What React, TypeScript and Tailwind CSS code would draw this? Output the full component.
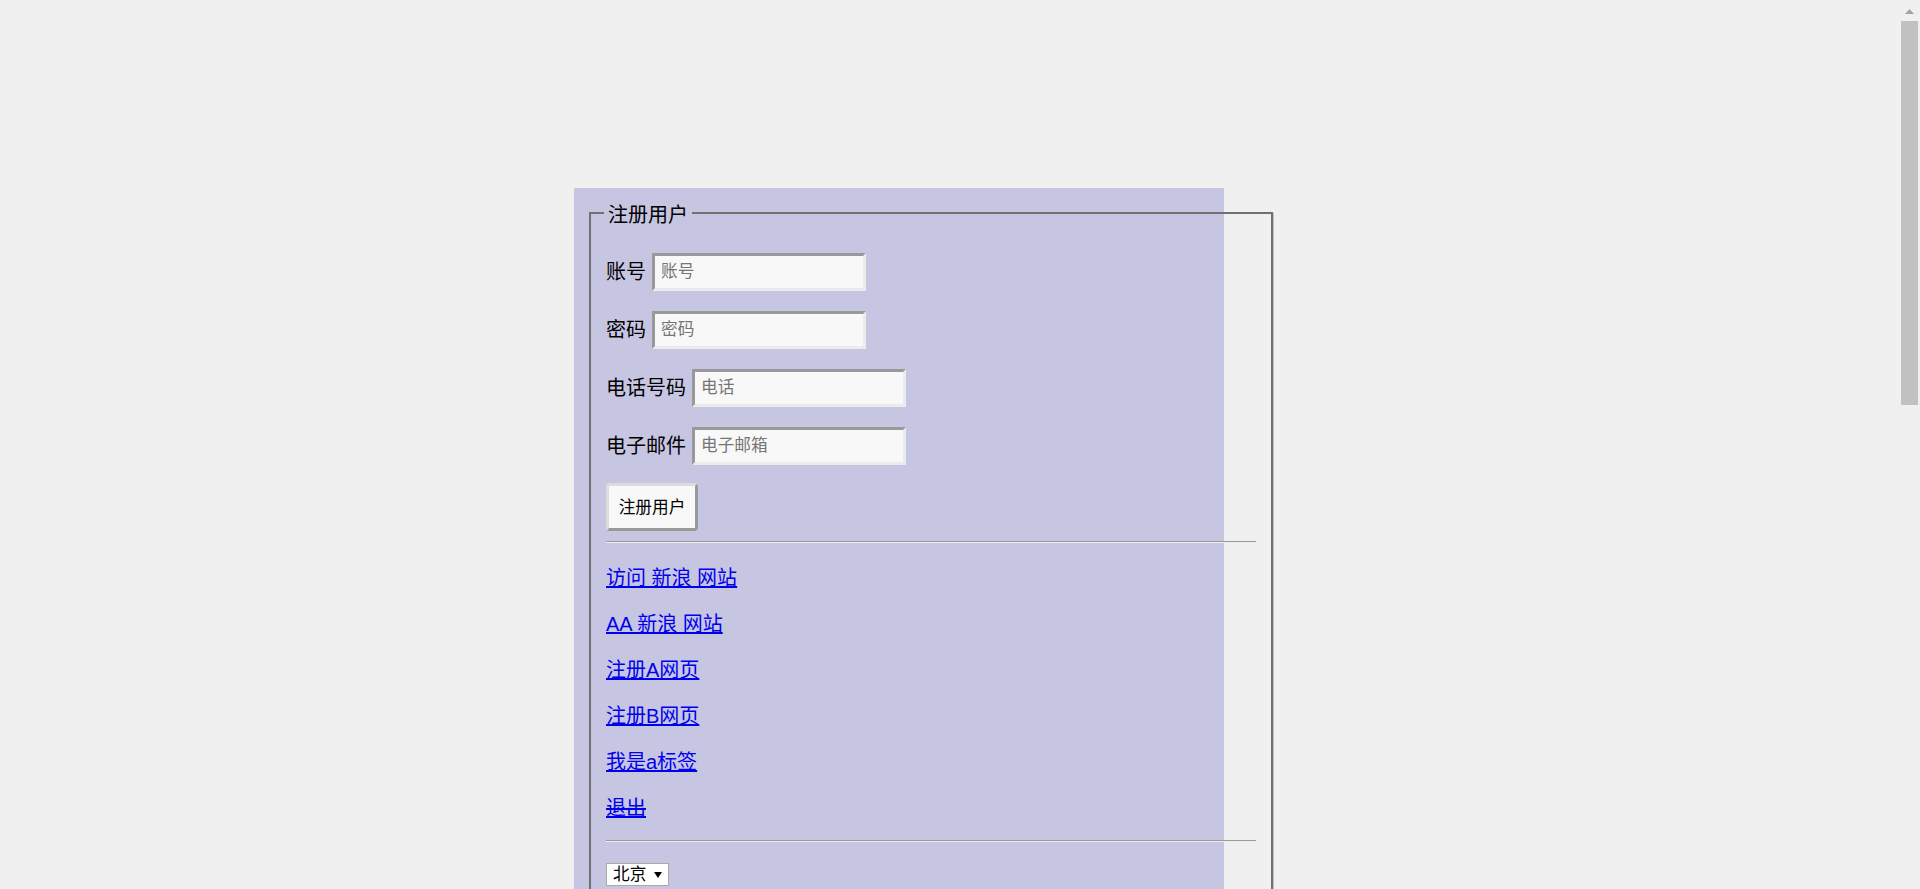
import React from "react";

const fields = [
  { label: "账号", placeholder: "账号", type: "text" },
  { label: "密码", placeholder: "密码", type: "password" },
  { label: "电话号码", placeholder: "电话", type: "tel" },
  { label: "电子邮件", placeholder: "电子邮箱", type: "email" },
];

const links = [
  { text: "访问 新浪 网站", strike: false },
  { text: "AA 新浪 网站", strike: false },
  { text: "注册A网页", strike: false },
  { text: "注册B网页", strike: false },
  { text: "我是a标签", strike: false },
  { text: "退出", strike: true },
];

const Rule = () => (
  <hr className="h-[2px] border-0 border-t border-b border-t-[#9a9a9a] border-b-[#eeeeee]" />
);

// stand-in for the browser's classic scrollbar seen in the screenshot
const Scrollbar = () => (
  <div aria-hidden className="fixed right-0 top-0 h-screen w-[19px] bg-[#f0f0f0]">
    <svg className="absolute left-[4px] top-[9px]" width="9" height="5" viewBox="0 0 9 5">
      <path d="M4.5 0L9 5H0z" fill="#a3a3a3" />
    </svg>
    <div className="absolute left-0 top-[21px] h-[384px] w-[17px] bg-[#c1c1c1]" />
  </div>
);

export default function App() {
  return (
    <div className="min-h-screen bg-[#f0f0f0] pt-[188px] pb-[40px] font-['Liberation_Sans','Noto_Sans_CJK_SC',sans-serif] text-[20px] text-black">
      <div className="ml-[574px] w-[650px] bg-[#c7c6e2] pt-[12px]">
        <fieldset className="ml-[15px] w-[684px] min-h-[1760px] border-2 border-[#717171] px-[15px] shadow-[1px_1px_0_#c4c4c4]">
          <legend className="-ml-[2px] px-[4px] leading-[26px]">
            <span className="relative top-[2px]">注册用户</span>
          </legend>

          <form className="pt-[27px]" onSubmit={(e) => e.preventDefault()}>
            {fields.map((f) => (
              <div key={f.label} className="mb-[20px] flex h-[38px] items-center gap-[6px]">
                <label className="leading-[26px]">{f.label}</label>
                <input
                  type={f.type}
                  placeholder={f.placeholder}
                  className="h-[38px] w-[214px] border-[3px] border-t-[#999999] border-l-[#999999] border-r-[#ebebeb] border-b-[#ebebeb] bg-[#f8f8f8] px-[6px] text-[16.67px] outline-none placeholder:text-[#757575]"
                />
              </div>
            ))}

            <button
              type="submit"
              className="-mt-[2px] flex h-[48px] w-[92px] items-center justify-center rounded-[4px] border-[3px] border-t-[#dcdcdc] border-l-[#dcdcdc] border-r-[#999999] border-b-[#999999] bg-[#f8f8f8] text-[16.67px]"
            >
              注册用户
            </button>
          </form>

          <div className="mt-[10px]">
            <Rule />
          </div>

          <div className="mt-[22px] flex flex-col gap-[20px]">
            {links.map((l) => (
              <p key={l.text} className="leading-[26px]">
                <a
                  href="#"
                  className={
                    l.strike
                      ? "text-[#0000ee] [text-decoration-line:underline_line-through]"
                      : "text-[#0000ee] underline"
                  }
                >
                  {l.text}
                </a>
              </p>
            ))}
          </div>

          <div className="mt-[19px]">
            <Rule />
          </div>

          <div className="relative mt-[21px] flex w-fit">
            <select className="h-[23px] w-[63px] appearance-none border border-[#a9a9a9] bg-white pl-[6px] text-[16.67px] leading-[21px] text-black outline-none">
              <option>北京</option>
              <option>上海</option>
              <option>广州</option>
            </select>
            <svg
              className="pointer-events-none absolute left-[48px] top-[9px]"
              width="8"
              height="6"
              viewBox="0 0 8 6"
            >
              <path d="M0 0h8L4 6z" fill="#000" />
            </svg>
          </div>
        </fieldset>
      </div>
      <Scrollbar />
    </div>
  );
}
